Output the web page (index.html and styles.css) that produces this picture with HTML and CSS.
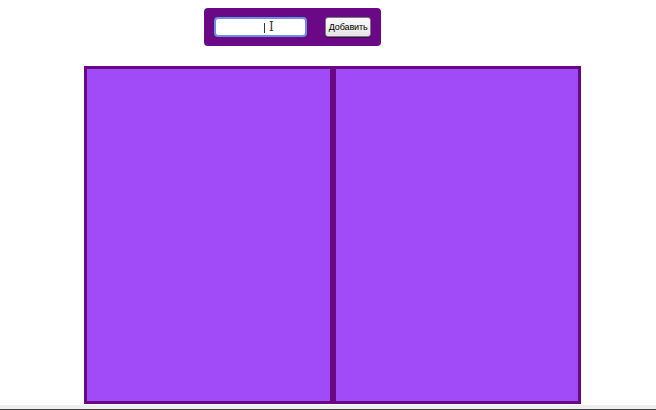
FILE: index.html
```html
<!DOCTYPE html>
<html lang="ru">
<head>
<meta charset="utf-8">
<link rel="stylesheet" href="styles.css">
</head>
<body>
<div class="page">
  <div class="toolbar-row">
    <form class="toolbar">
      <div class="field"><span class="caret"></span><span class="ibeam">I</span></div>
      <button type="button" class="btn">Добавить</button>
    </form>
  </div>
  <div class="board">
    <div class="column"></div>
    <div class="column"></div>
  </div>
  <div class="strip"></div>
</div>
</body>
</html>
```

FILE: styles.css
```css
html, body {
  margin: 0;
  padding: 0;
  background: #ffffff;
  font-family: "Liberation Sans", Arial, sans-serif;
}
.page {
  width: 656px;
  height: 410px;
  display: flex;
  flex-direction: column;
  overflow: hidden;
}
.toolbar-row {
  padding: 8px 0 0 204px;
  display: flex;
}
.toolbar {
  width: 177px;
  height: 38px;
  box-sizing: border-box;
  background: #6b0886;
  border-radius: 4px;
  display: flex;
  align-items: center;
  padding: 0 10px;
  margin: 0;
}
.field {
  width: 94px;
  height: 20px;
  box-sizing: border-box;
  background: #ffffff;
  border: 2px solid #6a92e0;
  border-radius: 4px;
  position: relative;
  margin-top: -1px;
}
.caret {
  position: absolute;
  left: 48px;
  top: 4px;
  width: 1px;
  height: 10px;
  background: #333;
}
.ibeam {
  position: absolute;
  left: 53px;
  top: 0px;
  font-family: "DejaVu Serif", serif;
  font-size: 12px;
  line-height: 16px;
  color: #333;
}
.btn {
  margin-left: 18px;
  width: 46px;
  height: 20px;
  box-sizing: border-box;
  padding: 0;
  font-family: "Liberation Sans", Arial, sans-serif;
  font-size: 9px;
  letter-spacing: -0.1px;
  white-space: nowrap;
  color: #000;
  background: linear-gradient(#fbfbfb, #e4e4e4);
  border: 1px solid #7a7a7a;
  border-radius: 3px;
  box-shadow: 0 1px 1px rgba(0,0,0,0.35);
  margin-top: -1px;
}
.board {
  margin: 20px 0 0 84px;
  width: 497px;
  height: 339px;
  display: flex;
}
.column {
  flex: 1;
  background: #a14af7;
  border: 3px solid #6a0884;
}
.strip {
  margin-top: 1px;
  height: 4px;
  background: #eeeeee;
  border-bottom: 1px solid #444;
}
```
